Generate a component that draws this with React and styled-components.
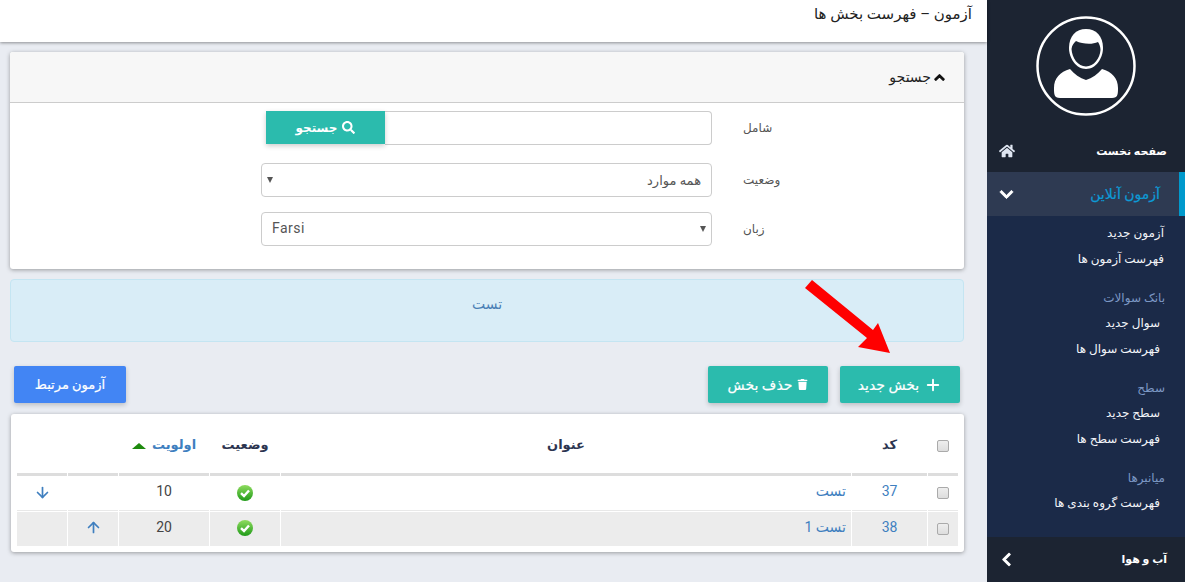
import React from "react";
import styled, { createGlobalStyle } from "styled-components";
import { FaHome, FaChevronDown, FaChevronLeft, FaChevronUp, FaSearch, FaTrash } from "react-icons/fa";
import { ArrowDown, ArrowUp, Plus } from "lucide-react";

const Global = createGlobalStyle`
  html, body { margin: 0; padding: 0; height: 582px; overflow: hidden; background: #e9ecf2; }
  body { font-family: Roboto, "DejaVu Sans", sans-serif; font-size: 13px; color: #333; }
  * { box-sizing: border-box; }
`;

const Page = styled.div`
  direction: rtl;
  display: flex;
  width: 1185px;
  height: 582px;
  position: relative;
`;

const Sidebar = styled.aside`
  width: 198px;
  flex: none;
  display: flex;
  flex-direction: column;
  background: #1b2a48;
  color: #fff;
`;

const AvatarBlock = styled.div`
  height: 130px;
  background: #1c2432;
  display: flex;
  justify-content: center;
  padding-top: 16px;
`;

const NavItem = styled.div`
  height: ${(p) => p.$h}px;
  display: flex;
  align-items: center;
  justify-content: space-between;
  padding: 0 18px 0 12px;
  background: #1c2432;
  font-size: 11px;
  font-weight: 700;
  color: #fff;
  svg { color: ${(p) => p.$iconColor || "#fff"}; }
`;

const ActiveItem = styled.div`
  height: 44px;
  display: flex;
  align-items: center;
  justify-content: space-between;
  padding: 0 19px 0 12px;
  background: #2e3a52;
  border-right: 6px solid #0099cc;
  font-size: 14px;
  color: #0d9ad6;
  -webkit-text-stroke: 0.2px #0d9ad6;
  svg { color: #fff; }
`;

const SubArea = styled.div`
  flex: 1;
  padding-top: 4px;
`;

const SubGroup = styled.div`
  margin-bottom: 15px;
`;

const GroupTitle = styled.div`
  height: 23px;
  line-height: 23px;
  padding-right: 20px;
  font-size: 12px;
  color: #7b97c4;
`;

const SubLink = styled.div`
  height: 26px;
  line-height: 26px;
  padding-right: ${(p) => (p.$top ? 21 : 25)}px;
  font-size: 12px;
  color: #f2f4f8;
`;

const Main = styled.main`
  width: 987px;
  flex: none;
  display: flex;
  flex-direction: column;
`;

const Header = styled.header`
  height: 42px;
  background: #fff;
  box-shadow: 0 1px 3px rgba(0, 0, 0, 0.4);
  padding: 4px 15px 0 0;
  font-size: 15px;
  line-height: 20px;
  color: #222;
`;

const Content = styled.div`
  padding: 10px 23px 0 10px;
  display: flex;
  flex-direction: column;
`;

const Panel = styled.section`
  height: 217px;
  background: #fff;
  border-radius: 3px;
  box-shadow: 0 1px 4px rgba(0, 0, 0, 0.35);
`;

const PanelHead = styled.div`
  height: 51px;
  background: #f7f7f7;
  border-bottom: 1px solid #ccc;
  display: flex;
  align-items: center;
  gap: 3px;
  padding-right: 19px;
  font-size: 14px;
  color: #222;
  border-radius: 3px 3px 0 0;
`;

const Form = styled.div`
  padding: 8px 181px 0 0;
  display: flex;
  flex-direction: column;
`;

const Row = styled.div`
  display: flex;
  align-items: center;
  margin-bottom: ${(p) => p.$mb || 0}px;
`;

const Label = styled.label`
  width: 40px;
  height: 34px;
  line-height: 34px;
  margin-left: 31px;
  font-size: 12px;
  color: #555;
  white-space: nowrap;
  display: flex;
  justify-content: flex-end;
`;

const SearchGroup = styled.div`
  width: 451px;
  height: 34px;
  padding-left: 5px;
  display: flex;
`;

const SearchInput = styled.input`
  flex: 1;
  min-width: 0;
  height: 34px;
  border: 1px solid #ccc;
  border-left: none;
  border-radius: 0 4px 4px 0;
  background: #fff;
`;

const SearchButton = styled.button`
  width: 119px;
  height: 33px;
  border: none;
  background: #2bbbad;
  color: #fff;
  font: 700 12px Roboto, "DejaVu Sans", sans-serif;
  display: flex;
  align-items: center;
  justify-content: center;
  gap: 5px;
  box-shadow: 0 2px 5px rgba(0, 0, 0, 0.2);
`;

const SelectWrap = styled.div`
  width: 451px;
  height: 34px;
  position: relative;
`;

const Select = styled.select`
  appearance: none;
  width: 100%;
  height: 34px;
  border: 1px solid #ccc;
  border-radius: 4px;
  background: #fff;
  padding: 0 10px;
  color: #555;
  font: 13px Roboto, "DejaVu Sans", sans-serif;
  direction: ${(p) => (p.$ltr ? "ltr" : "rtl")};
  ${(p) => p.$ltr && "font-size: 14px; letter-spacing: 0.5px; padding-bottom: 2px;"}
`;

const Caret = styled.span`
  position: absolute;
  top: 14px;
  ${(p) => (p.$side === "left" ? "left: 6px;" : "right: 6px;")}
  width: 0;
  height: 0;
  border-left: 3px solid transparent;
  border-right: 3px solid transparent;
  border-top: 6px solid #555;
`;

const Alert = styled.div`
  margin-top: 10px;
  height: 63px;
  padding-bottom: 14px;
  background: #d9edf7;
  border: 1px solid #c4e5f2;
  border-radius: 4px;
  display: flex;
  align-items: center;
  justify-content: center;
  font-size: 14px;
  color: #4a7fb5;
`;

const Toolbar = styled.div`
  margin-top: 24px;
  padding: 0 4px;
  display: flex;
  justify-content: space-between;
`;

const ButtonGroup = styled.div`
  display: flex;
  gap: 12px;
`;

const ActionButton = styled.button`
  width: ${(p) => p.$w || 120}px;
  height: 37px;
  border: none;
  border-radius: 2px;
  background: ${(p) => p.$bg || "#2bbbad"};
  color: #fff;
  font: ${(p) => p.$fs || 14}px Roboto, "DejaVu Sans", sans-serif;
  -webkit-text-stroke: 0.2px #fff;
  display: flex;
  align-items: center;
  justify-content: center;
  gap: 5px;
  box-shadow: 0 2px 5px rgba(0, 0, 0, 0.2);
`;

const TableCard = styled.div`
  margin-top: 11px;
  margin-left: 1px;
  height: 138px;
  padding: 2px 5px 0 4px;
  background: #fff;
  border-radius: 3px;
  box-shadow: 0 1px 4px rgba(0, 0, 0, 0.35);
`;

const Table = styled.table`
  width: 943px;
  table-layout: fixed;
  border-collapse: separate;
  border-spacing: 1px 0;
`;

const Th = styled.th`
  width: ${(p) => p.$w}px;
  height: 60px;
  padding: 0;
  border-bottom: 3px solid #ddd;
  text-align: center;
  font-size: 13px;
  font-weight: 700;
  color: ${(p) => p.$color || "#2c3550"};
`;

const Td = styled.td`
  height: 35px;
  padding: 0 ${(p) => (p.$start ? "5px" : "0")} ${(p) => (p.$text ? 4 : 2)}px 0;
  border-bottom: ${(p) => (p.$last ? "none" : "1px solid #e8e8e8")};
  text-align: ${(p) => (p.$start ? "right" : "center")};
  font-size: 14px;
  color: ${(p) => p.$color || "#444"};
  background: ${(p) => (p.$shade ? "linear-gradient(#fff 0 1px, #ececec 1px)" : "#fff")};
`;

const CheckBox = styled.span`
  display: inline-block;
  width: 12px;
  height: 12px;
  vertical-align: middle;
  border: 1px solid #aaa;
  border-radius: 2px;
  background: linear-gradient(#eee, #ddd);
`;

const SortMark = styled.span`
  display: inline-block;
  width: 0;
  height: 0;
  margin-right: 6px;
  vertical-align: middle;
  border-left: 7px solid transparent;
  border-right: 7px solid transparent;
  border-bottom: 6px solid #1e8a0e;
`;

const CellIcon = styled.span`
  display: inline-flex;
  color: #3f7fbf;
  vertical-align: middle;
`;

const ArrowOverlay = styled.svg`
  position: absolute;
  left: 800px;
  top: 275px;
  width: 100px;
  height: 85px;
  pointer-events: none;
`;

const Avatar = () => (
  <svg width="100" height="100" viewBox="0 0 100 100">
    <circle cx="50" cy="50" r="48.500" fill="none" stroke="#fff" strokeWidth="2.500" />
    <path fill="#fff" d="M33 32C33 20 40 13 50 13C60 13 67 20 67 32C67 42 60 53 50 53C40 53 33 42 33 32Z" />
    <path fill="#1c2432" d="M35.500 33C36 29 38 27 40 25C46 28 56 29 62 26C63.500 28 64.500 31 64.500 34C64 42 58 50.500 50 50.500C42 50.500 36 42 35.500 33Z" />
    <path fill="#fff" d="M34 53C38 58 44 62 50 64C56 62 62 58 66 53C76 56 82 62 82 72C82 78 82 82 76 82L24 82C18 82 18 78 18 72C18 62 24 56 34 53Z" />
  </svg>
);

const Check = ({ id }) => (
  <svg width="16" height="16" viewBox="0 0 16 16" style={{ verticalAlign: "middle" }}>
    <defs>
      <linearGradient id={id} x1="0" y1="0" x2="0" y2="1">
        <stop offset="0" stopColor="#8fdc5f" />
        <stop offset="1" stopColor="#1f9a18" />
      </linearGradient>
    </defs>
    <circle cx="8" cy="8" r="8" fill={`url(#${id})`} />
    <path d="M4 8.200l3 2.800 5-5.500" fill="none" stroke="#fff" strokeWidth="2.400" />
  </svg>
);

export default function App() {
  return (
    <Page>
      <Global />
      <Sidebar>
        <AvatarBlock>
          <Avatar />
        </AvatarBlock>
        <NavItem $h={42} $iconColor="#dfe6f2">
          <span>صفحه نخست</span>
          <FaHome size={16} />
        </NavItem>
        <ActiveItem>
          <span>آزمون آنلاین</span>
          <FaChevronDown size={15} stroke="currentColor" strokeWidth={30} />
        </ActiveItem>
        <SubArea>
          <SubGroup>
            <SubLink $top>آزمون جدید</SubLink>
            <SubLink $top>فهرست آزمون ها</SubLink>
          </SubGroup>
          <SubGroup>
            <GroupTitle>بانک سوالات</GroupTitle>
            <SubLink>سوال جدید</SubLink>
            <SubLink>فهرست سوال ها</SubLink>
          </SubGroup>
          <SubGroup>
            <GroupTitle>سطح</GroupTitle>
            <SubLink>سطح جدید</SubLink>
            <SubLink>فهرست سطح ها</SubLink>
          </SubGroup>
          <SubGroup>
            <GroupTitle>میانبرها</GroupTitle>
            <SubLink>فهرست گروه بندی ها</SubLink>
          </SubGroup>
        </SubArea>
        <NavItem $h={45}>
          <span>آب و هوا</span>
          <FaChevronLeft size={15} stroke="currentColor" strokeWidth={30} />
        </NavItem>
      </Sidebar>
      <Main>
        <Header>آزمون – فهرست بخش ها</Header>
        <Content>
          <Panel>
            <PanelHead>
              <FaChevronUp size={11} color="#111" stroke="currentColor" strokeWidth={50} />
              <span>جستجو</span>
            </PanelHead>
            <Form>
              <Row $mb={18}>
                <Label>شامل</Label>
                <SearchGroup>
                  <SearchInput />
                  <SearchButton>
                    <FaSearch size={13} />
                    جستجو
                  </SearchButton>
                </SearchGroup>
              </Row>
              <Row $mb={15}>
                <Label>وضعیت</Label>
                <SelectWrap>
                  <Select defaultValue="all">
                    <option value="all">همه موارد</option>
                  </Select>
                  <Caret $side="left" />
                </SelectWrap>
              </Row>
              <Row>
                <Label>زبان</Label>
                <SelectWrap>
                  <Select $ltr defaultValue="fa">
                    <option value="fa">Farsi</option>
                  </Select>
                  <Caret $side="right" />
                </SelectWrap>
              </Row>
            </Form>
          </Panel>
          <Alert>تست</Alert>
          <Toolbar>
            <ButtonGroup>
              <ActionButton>
                <Plus size={18} strokeWidth={2.500} />
                بخش جدید
              </ActionButton>
              <ActionButton>
                <FaTrash size={11} />
                حذف بخش
              </ActionButton>
            </ButtonGroup>
            <ActionButton $w={112} $bg="#4285f4" $fs={13}>آزمون مرتبط</ActionButton>
          </Toolbar>
          <TableCard>
            <Table>
              <thead>
                <tr>
                  <Th $w={30}><CheckBox /></Th>
                  <Th $w={75}>کد</Th>
                  <Th $w={570}>عنوان</Th>
                  <Th $w={70}>وضعیت</Th>
                  <Th $w={90} $color="#3f7fbf">اولویت<SortMark /></Th>
                  <Th $w={50} />
                  <Th $w={50} />
                </tr>
              </thead>
              <tbody>
                <tr>
                  <Td><CheckBox /></Td>
                  <Td $text $color="#3f7fbf">37</Td>
                  <Td $text $start $color="#3f7fbf">تست</Td>
                  <Td><Check id="c1" /></Td>
                  <Td $text>10</Td>
                  <Td />
                  <Td><CellIcon><ArrowDown size={17} strokeWidth={2.400} /></CellIcon></Td>
                </tr>
                <tr>
                  <Td $shade $last><CheckBox /></Td>
                  <Td $text $shade $last $color="#3f7fbf">38</Td>
                  <Td $text $shade $last $start $color="#3f7fbf">تست 1</Td>
                  <Td $shade $last><Check id="c2" /></Td>
                  <Td $text $shade $last>20</Td>
                  <Td $shade $last><CellIcon><ArrowUp size={17} strokeWidth={2.400} /></CellIcon></Td>
                  <Td $shade $last />
                </tr>
              </tbody>
            </Table>
          </TableCard>
        </Content>
      </Main>
      <ArrowOverlay viewBox="0 0 100 85">
        <path fill="#f00" d="M5 13L12 5L73 55L78 48L90 78L58 72L67 63Z" />
      </ArrowOverlay>
    </Page>
  );
}
